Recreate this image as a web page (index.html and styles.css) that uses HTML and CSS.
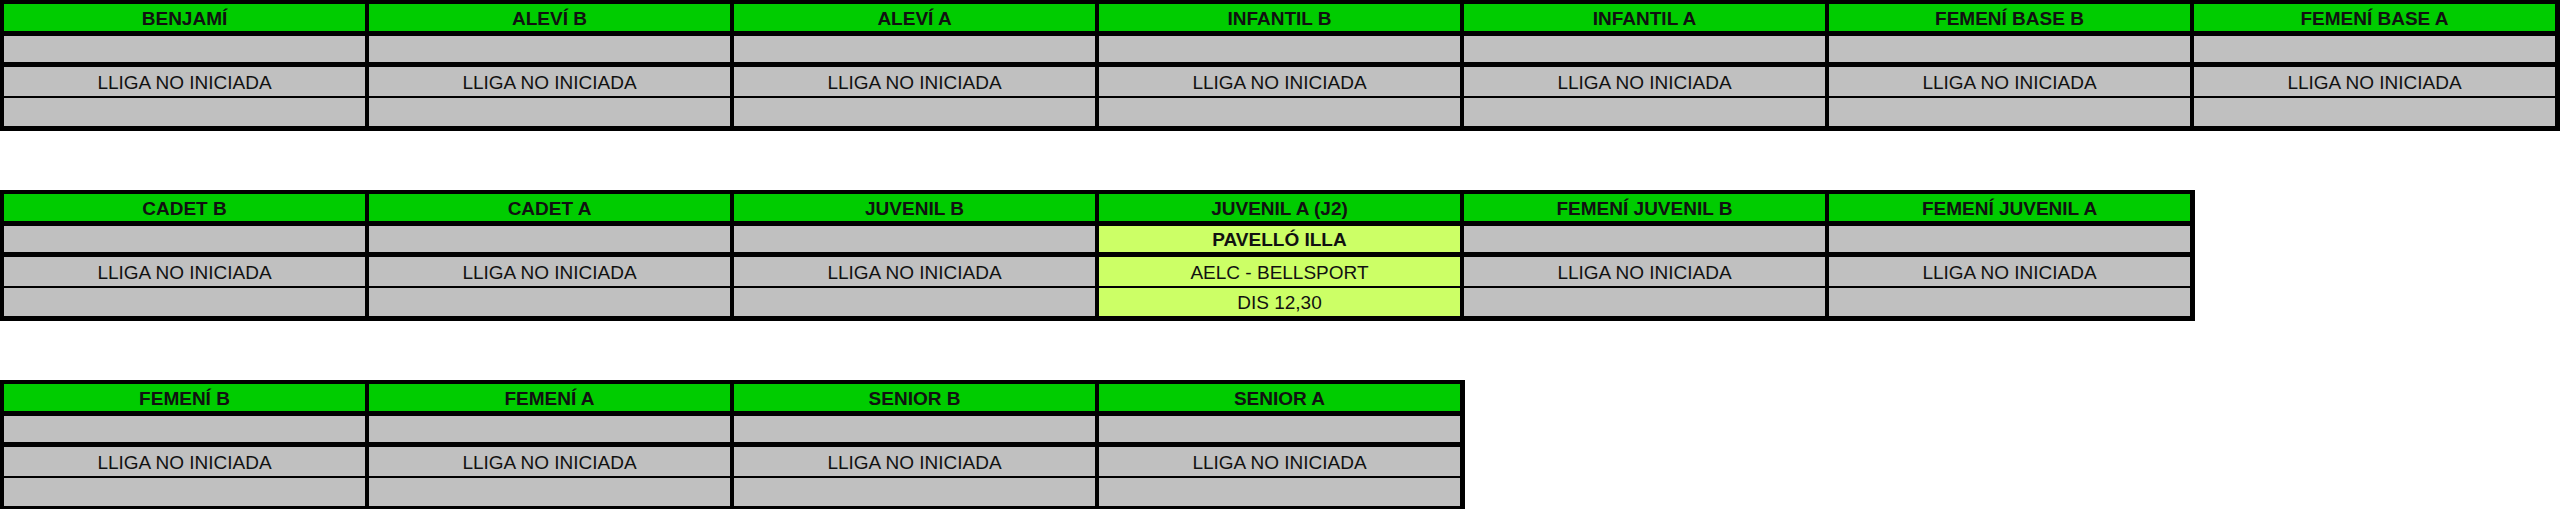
FILE: index.html
```html
<!DOCTYPE html>
<html lang="ca">
<head>
<meta charset="utf-8">
<title>Horaris</title>
<link rel="stylesheet" href="styles.css">
</head>
<body>
<main class="page">
  <section class="sheet cols7">
    <div class="cell head">BENJAMÍ</div>
    <div class="cell head">ALEVÍ B</div>
    <div class="cell head">ALEVÍ A</div>
    <div class="cell head">INFANTIL B</div>
    <div class="cell head">INFANTIL A</div>
    <div class="cell head">FEMENÍ BASE B</div>
    <div class="cell head">FEMENÍ BASE A</div>

    <div class="cell place"></div>
    <div class="cell place"></div>
    <div class="cell place"></div>
    <div class="cell place"></div>
    <div class="cell place"></div>
    <div class="cell place"></div>
    <div class="cell place"></div>

    <div class="cell match">LLIGA NO INICIADA</div>
    <div class="cell match">LLIGA NO INICIADA</div>
    <div class="cell match">LLIGA NO INICIADA</div>
    <div class="cell match">LLIGA NO INICIADA</div>
    <div class="cell match">LLIGA NO INICIADA</div>
    <div class="cell match">LLIGA NO INICIADA</div>
    <div class="cell match">LLIGA NO INICIADA</div>

    <div class="cell time"></div>
    <div class="cell time"></div>
    <div class="cell time"></div>
    <div class="cell time"></div>
    <div class="cell time"></div>
    <div class="cell time"></div>
    <div class="cell time"></div>
  </section>

  <section class="sheet cols6">
    <div class="cell head">CADET B</div>
    <div class="cell head">CADET A</div>
    <div class="cell head">JUVENIL B</div>
    <div class="cell head">JUVENIL A (J2)</div>
    <div class="cell head">FEMENÍ JUVENIL B</div>
    <div class="cell head">FEMENÍ JUVENIL A</div>

    <div class="cell place"></div>
    <div class="cell place"></div>
    <div class="cell place"></div>
    <div class="cell place active bold">PAVELLÓ ILLA</div>
    <div class="cell place"></div>
    <div class="cell place"></div>

    <div class="cell match">LLIGA NO INICIADA</div>
    <div class="cell match">LLIGA NO INICIADA</div>
    <div class="cell match">LLIGA NO INICIADA</div>
    <div class="cell match active">AELC - BELLSPORT</div>
    <div class="cell match">LLIGA NO INICIADA</div>
    <div class="cell match">LLIGA NO INICIADA</div>

    <div class="cell time"></div>
    <div class="cell time"></div>
    <div class="cell time"></div>
    <div class="cell time active">DIS 12,30</div>
    <div class="cell time"></div>
    <div class="cell time"></div>
  </section>

  <section class="sheet cols4">
    <div class="cell head">FEMENÍ B</div>
    <div class="cell head">FEMENÍ A</div>
    <div class="cell head">SENIOR B</div>
    <div class="cell head">SENIOR A</div>

    <div class="cell place"></div>
    <div class="cell place"></div>
    <div class="cell place"></div>
    <div class="cell place"></div>

    <div class="cell match">LLIGA NO INICIADA</div>
    <div class="cell match">LLIGA NO INICIADA</div>
    <div class="cell match">LLIGA NO INICIADA</div>
    <div class="cell match">LLIGA NO INICIADA</div>

    <div class="cell time"></div>
    <div class="cell time"></div>
    <div class="cell time"></div>
    <div class="cell time"></div>
  </section>
</main>
</body>
</html>
```

FILE: styles.css
```css
html, body {
  margin: 0;
  padding: 0;
  background: #ffffff;
}

body {
  font-family: "Liberation Sans", Arial, sans-serif;
  font-size: 19px;
  color: #111111;
}

.page {
  display: flex;
  flex-direction: column;
  align-items: flex-start;
  gap: 59px;
}

.sheet {
  display: grid;
  background: #000000;
  padding: 4px 5px 5px 4px;
  column-gap: 4px;
  row-gap: 0;
}

.cols7 { grid-template-columns: repeat(7, 361px); }
.cols6 { grid-template-columns: repeat(6, 361px); }
.cols4 { grid-template-columns: repeat(4, 361px); }

.cell {
  display: flex;
  align-items: center;
  justify-content: center;
  background: #c0c0c0;
  line-height: 1;
  white-space: nowrap;
  padding-top: 1px;
  box-sizing: border-box;
}

.head {
  background: #00cc00;
  font-weight: bold;
  height: 27px;
  margin-bottom: 5px;
}

.place {
  height: 26px;
  margin-bottom: 5px;
}

.match {
  height: 29px;
  margin-bottom: 2px;
  padding-top: 2px;
}

.time {
  height: 28px;
}

.active {
  background: #ccff66;
}

.bold {
  font-weight: bold;
}
```
